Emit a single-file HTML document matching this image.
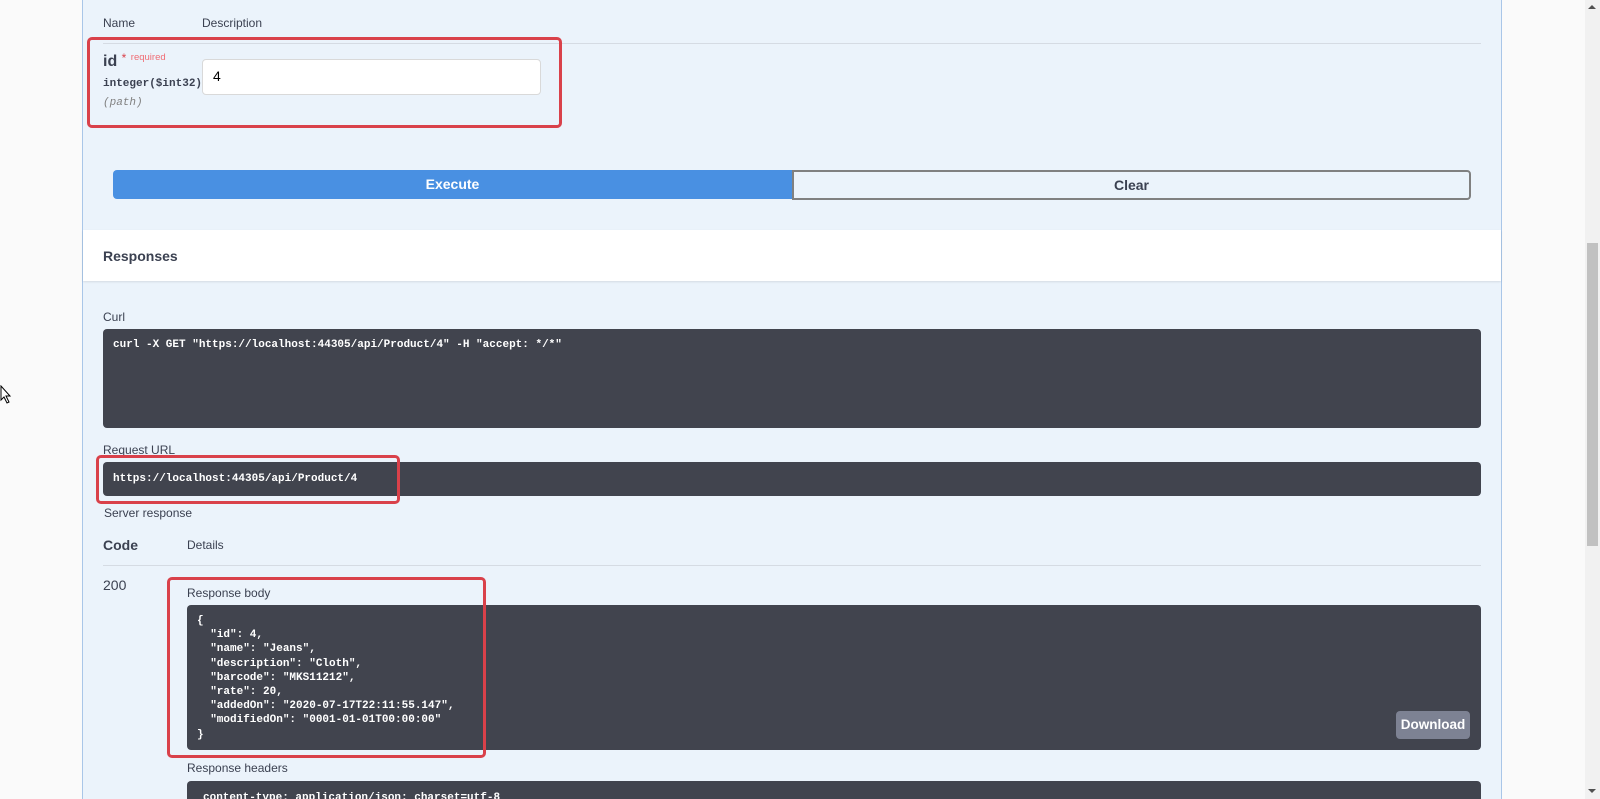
<!DOCTYPE html>
<html style="width:1600px;height:799px;overflow:hidden"><head><style>
body{margin:0;width:1600px;height:799px;background:#fafafa;position:relative;overflow:hidden;font-family:"Liberation Sans",sans-serif;color:#3b4151}
.a{position:absolute}
.panel{left:82px;top:-2px;width:1418px;height:805px;background:#ebf3fb;border:1px solid #a9c6e8;border-top:none}
.lbl{font-size:12px;color:#3b4151}
.dark{background:#41444e;border-radius:4px}
.code{font-family:"Liberation Mono",monospace;font-weight:bold;font-size:11px;color:#fff;white-space:pre;line-height:14.2px}
.red{border:3px solid #d9414a;border-radius:5px}
</style></head><body>
<div class="a panel"></div>
<div class="a lbl" style="left:103px;top:16px;font-size:12px">Name</div>
<div class="a lbl" style="left:202px;top:16px;font-size:12px">Description</div>
<div class="a" style="left:103px;top:43px;width:1378px;height:1px;background:#d5dbe3"></div>
<div class="a" style="left:103px;top:53px;font-size:16px;font-weight:bold">id <span style="color:#d9414a;font-size:12px;font-weight:normal;position:relative;top:-4px">*</span> <span style="color:#f06d75;font-size:9.5px;font-weight:normal;position:relative;top:-6px">required</span></div>
<div class="a" style="left:202px;top:59px;width:337px;height:34px;background:#fff;border:1px solid #d9d9d9;border-radius:4px"></div>
<div class="a" style="left:103px;top:78px;font-family:'Liberation Mono',monospace;font-size:11px;font-weight:bold;color:#3b4151;z-index:2">integer($int32)</div>
<div class="a" style="left:103px;top:97px;font-family:'Liberation Mono',monospace;font-size:11px;font-style:italic;color:#808080">(path)</div>
<div class="a" style="left:213px;top:68px;font-size:14px;color:#000">4</div>
<div class="a red" style="left:87px;top:37px;width:469px;height:85px"></div>
<div class="a" style="left:113px;top:170px;width:679px;height:29px;background:#4990e2;border-radius:4px 0 0 4px;color:#fff;font-weight:bold;font-size:14px;text-align:center;line-height:29px">Execute</div>
<div class="a" style="left:792px;top:170px;width:675px;height:26px;border:2px solid #808080;border-radius:0 4px 4px 0;font-weight:bold;font-size:14px;text-align:center;line-height:26px">Clear</div>
<div class="a" style="left:83px;top:230px;width:1418px;height:51px;background:#fff;box-shadow:0 1px 2px rgba(0,0,0,.1)"></div>
<div class="a" style="left:103px;top:248px;font-size:14px;font-weight:bold">Responses</div>
<div class="a lbl" style="left:103px;top:310px">Curl</div>
<div class="a dark" style="left:103px;top:329px;width:1378px;height:99px"></div>
<div class="a code" style="left:113px;top:338px">curl -X GET "https://localhost:44305/api/Product/4" -H "accept: */*"</div>
<div class="a lbl" style="left:103px;top:443px">Request URL</div>
<div class="a dark" style="left:103px;top:462px;width:1378px;height:34px"></div>
<div class="a code" style="left:113px;top:472px">https://localhost:44305/api/Product/4</div>
<div class="a red" style="left:96px;top:455px;width:298px;height:43px"></div>
<div class="a lbl" style="left:104px;top:506px">Server response</div>
<div class="a" style="left:103px;top:537px;font-size:14px;font-weight:bold">Code</div>
<div class="a lbl" style="left:187px;top:538px">Details</div>
<div class="a" style="left:103px;top:565px;width:1378px;height:1px;background:#d5dbe3"></div>
<div class="a" style="left:103px;top:577px;font-size:14px">200</div>
<div class="a lbl" style="left:187px;top:586px">Response body</div>
<div class="a dark" style="left:187px;top:605px;width:1294px;height:145px"></div>
<div class="a code" style="left:197px;top:614px">{
  "id": 4,
  "name": "Jeans",
  "description": "Cloth",
  "barcode": "MKS11212",
  "rate": 20,
  "addedOn": "2020-07-17T22:11:55.147",
  "modifiedOn": "0001-01-01T00:00:00"
}</div>
<div class="a" style="left:1396px;top:711px;width:74px;height:28px;background:#7d8293;border-radius:4px;color:#fff;font-weight:bold;font-size:13.5px;text-align:center;line-height:28px">Download</div>
<div class="a red" style="left:167px;top:577px;width:313px;height:175px"></div>
<div class="a lbl" style="left:187px;top:761px">Response headers</div>
<div class="a dark" style="left:187px;top:781px;width:1294px;height:25px"></div>
<div class="a code" style="left:203px;top:791px">content-type: application/json; charset=utf-8</div>
<div class="a" style="left:1585px;top:0;width:15px;height:799px;background:#f1f1f1"></div>
<div class="a" style="left:1587px;top:243px;width:11px;height:303px;background:#c1c1c1"></div>
<div class="a" style="left:1588px;top:5px;width:0;height:0;border-left:4px solid transparent;border-right:4px solid transparent;border-bottom:4px solid #505050"></div>
<div class="a" style="left:1588px;top:789px;width:0;height:0;border-left:4px solid transparent;border-right:4px solid transparent;border-top:4px solid #505050"></div>
<svg class="a" style="left:0;top:385px" width="12" height="20"><path d="M1 1 L1 15 L4 12 L7 18 L9 17 L6 11 L10 11 Z" fill="#fff" stroke="#000" stroke-width="1"/></svg>
</body></html>
